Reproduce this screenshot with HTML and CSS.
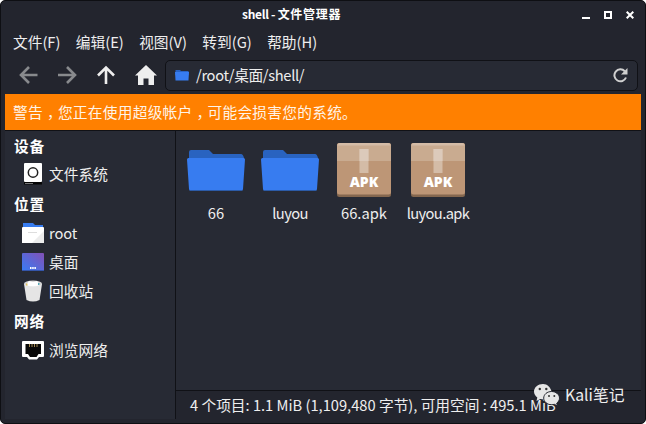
FILE: index.html
```html
<!DOCTYPE html>
<html lang="zh-CN">
<head>
<meta charset="utf-8">
<title>shell - 文件管理器</title>
<link rel="stylesheet" href="styles.css">
</head>
<body>
<div class="window">
  <header class="titlebar">
    <h1 class="title">shell - <span class="title-cjk">文件管理器</span></h1>
    <div class="controls">
      <svg width="8" height="8" viewBox="0 0 8 8"><path d="M0 6h8v2H0z" fill="#fff"/></svg>
      <svg width="8" height="8" viewBox="0 0 8 8"><path d="M1 1h6v6H1z" fill="none" stroke="#fff" stroke-width="2"/></svg>
      <svg width="8" height="8" viewBox="0 0 8 8"><path d="M.7.7l6.600 6.600M7.300.7L.7 7.300" stroke="#fff" stroke-width="2"/></svg>
    </div>
  </header>
  <nav class="menubar">
    <span>文件(F)</span><span>编辑(E)</span><span>视图(V)</span><span>转到(G)</span><span>帮助(H)</span>
  </nav>
  <div class="toolbar">
    <svg class="tool" width="20" height="20" viewBox="0 0 20 20"><path d="M18.500 10H2.500M10 2l-8 8 8 8" fill="none" stroke="#888a8d" stroke-width="2.600"/></svg>
    <svg class="tool" width="20" height="20" viewBox="0 0 20 20"><path d="M1 10h16M10 2l8 8-8 8" fill="none" stroke="#888a8d" stroke-width="2.600"/></svg>
    <svg class="tool up" width="20" height="20" viewBox="0 0 20 20"><path d="M10 19V3M2 10.500l8-8 8 8" fill="none" stroke="#eee" stroke-width="2.600"/></svg>
    <svg class="tool home" width="22" height="20" viewBox="0 0 22 20"><path d="M11 0L0 10.500h3V20h5.500v-6.500h5V20H19v-9.500h3z" fill="#eee"/></svg>
    <div class="location">
      <svg width="14" height="11" viewBox="0 0 14 11"><path d="M.5 0H5l1 1h7.500v4H.5z" fill="#2963c4"/><path d="M0 2h14l-.5 8.500H.5z" fill="#377cf0"/></svg>
      <span class="path">/root/桌面/shell/</span>
      <svg width="15" height="15" viewBox="0 0 15 15"><path d="M11.800 3.200A6 6 0 1 0 13 9.500" fill="none" stroke="#d0d0d0" stroke-width="2"/><path d="M14.500 0v6.500H8z" fill="#d0d0d0"/></svg>
    </div>
  </div>
  <div class="warning">警告<span class="comma">，</span>您正在使用超级帐户<span class="comma">，</span>可能会损害您的系统。</div>
  <div class="body">
    <aside class="sidebar">
      <h2>设备</h2>
      <div class="place">
        <svg width="22" height="22" viewBox="0 0 22 22"><path d="M2 18h18v3.500H2z" fill="#050505"/><rect x="2" y="0" width="18" height="19" rx="1" fill="#fff"/><circle cx="11" cy="9.500" r="4.700" fill="none" stroke="#222" stroke-width="1.500"/><path d="M3 20h8v1H3z" fill="#777"/></svg>
        <span>文件系统</span>
      </div>
      <h2>位置</h2>
      <div class="place">
        <svg width="22" height="22" viewBox="0 0 22 22"><path d="M1 2h10l2 2h8v4H1z" fill="#377cf0"/><path d="M0 7q0-1 1-1h20q1 0 1 1v15H0z" fill="#fff"/><path d="M22 10v12H10z" fill="#ececec"/><path d="M6 11.500h9" stroke="#ddd"/></svg>
        <span class="latin">root</span>
      </div>
      <div class="place">
        <svg width="22" height="22" viewBox="0 0 22 22"><defs><linearGradient id="desk" x1="0" y1="1" x2="1" y2="0"><stop stop-color="#377cf5"/><stop offset="1" stop-color="#8350b5"/></linearGradient></defs><rect y="2" width="22" height="18" rx="1" fill="url(#desk)"/><path d="M0 19h22v1H0z" fill="#3455aa"/><path d="M8 16h1.500v2H8zM10.200 16h1.500v2h-1.500zM12.400 16h1.500v2h-1.500z" fill="#fff"/></svg>
        <span>桌面</span>
      </div>
      <div class="place">
        <svg width="22" height="22" viewBox="0 0 22 22"><path d="M2 4l2.500 16q6.500 3 13 0L20 4z" fill="#e5e5e5"/><ellipse cx="11" cy="3.500" rx="9" ry="3" fill="#d5d5d5"/><path d="M4 5l3-4 4 1 4-1 3 4q-7 3-14 0" fill="#fff"/><path d="M4 3.500h1.500v2H4z" fill="#e5c45b"/><path d="M16 3h1.500v2H16z" fill="#56a8b5"/></svg>
        <span>回收站</span>
      </div>
      <h2>网络</h2>
      <div class="place network">
        <svg width="22" height="22" viewBox="0 0 22 22"><path d="M1 2h20q1 0 1 1v14q0 1-1 1h-4l-2 2.500H7L5 18H1q-1 0-1-1V3q0-1 1-1z" fill="#fff"/><path d="M3.500 5h15.500v10h-2.500l-2 3H8l-2-3H3.500z" fill="#080808"/><path d="M7.500 5v3M10 5v3M12.500 5v3M15 5v3" stroke="#a48b55"/></svg>
        <span>浏览网络</span>
      </div>
    </aside>
    <main class="main">
      <div class="files">
        <figure class="file">
          <svg width="58" height="56" viewBox="0 0 58 56"><use href="#folder"/>
            <defs><g id="folder"><path d="M2 9q0-2 2-2h18l4 4h28q2 0 3 4v6H2z" fill="#2963c0"/><path d="M1.500 15h55q1.500 0 1.500 1.500L56 46q0 2-2 2H4q-2 0-2-2L0 16.500Q0 15 1.500 15z" fill="#377cf0"/><path d="M3 47.500h52" stroke="#2c5ba7"/></g></defs>
          </svg>
          <figcaption>66</figcaption>
        </figure>
        <figure class="file">
          <svg width="58" height="56" viewBox="0 0 58 56"><use href="#folder"/></svg>
          <figcaption class="tight">luyou</figcaption>
        </figure>
        <figure class="file">
          <svg width="58" height="56" viewBox="0 0 58 56">
            <defs><g id="package"><rect x="2" y="0" width="54" height="54" rx="2.500" fill="#84674f"/><rect x="2" y="0" width="54" height="51.500" rx="2.500" fill="#bd9676"/><path d="M2 18V2.500Q2 0 4.500 0h49Q56 0 56 2.500V18z" fill="#c9ab90"/><path d="M2.500 2.500Q3 0 5 0h48q2 0 2.500 2.500z" fill="#d4bca7"/><path d="M24.500 6h9v24h-9z" fill="#d4bca7"/><path d="M24.500 6h9v12h-9z" fill="#dccabb"/></g></defs>
            <use href="#package"/><text class="badge" x="29" y="43.500" text-anchor="middle">APK</text>
          </svg>
          <figcaption>66.apk</figcaption>
        </figure>
        <figure class="file">
          <svg width="58" height="56" viewBox="0 0 58 56"><use href="#package"/><text class="badge" x="29" y="43.500" text-anchor="middle">APK</text></svg>
          <figcaption class="tight">luyou.apk</figcaption>
        </figure>
      </div>
      <footer class="status">4 个项目: 1.1 MiB (1,109,480 字节), 可用空间 : 495.1 MiB</footer>
    </main>
  </div>
  <div class="watermark">
    <svg width="26" height="23" viewBox="0 0 26 23"><path d="M9 0C4 0 0 3.400 0 7.600c0 2.400 1.300 4.500 3.300 5.900L2.500 17l3.800-2q4 1 7-.2C21 14 18 0 9 0z" fill="#e6e6e6"/><path d="M17.500 7.500c-4.400 0-7.800 3-7.800 6.600s3.500 6.600 7.800 6.600q1.500 0 2.800-.4l3.200 1.700-.8-2.800c1.600-1.200 2.800-3 2.800-5.100 0-3.600-3.600-6.600-8-6.600z" fill="#e6e6e6" stroke="#23252e" stroke-width="1"/><g fill="#333"><circle cx="5.800" cy="5" r="1.200"/><circle cx="12.300" cy="5" r="1.200"/><circle cx="15" cy="12" r="1"/><circle cx="20.300" cy="12" r="1"/></g></svg>
    <span class="watermark-name">Kali笔记</span>
  </div>
</div>
</body>
</html>
```
FILE: styles.css
```css
* { box-sizing: border-box; }
body {
  margin: 0;
  background: #fff;
  color: #eee;
  font: 14.7px/20px "Noto Sans CJK SC", sans-serif;
}
svg { display: block; flex: none; }
h1, h2, figure { margin: 0; }
.window {
  position: relative;
  width: 646px;
  height: 424px;
  padding: 0 4px 4px;
  border: 1px solid #0e0f13;
  border-radius: 5px;
  background: #23252e;
  display: flex;
  flex-direction: column;
  white-space: nowrap;
}
.titlebar {
  height: 27px;
  display: flex;
  align-items: center;
  justify-content: space-between;
  padding: 0 7px 0 237px;
}
.title {
  padding-bottom: 2px;
  color: #fff;
  font-size: 12px;
  font-weight: 700;
  line-height: 20px;
  letter-spacing: -.3px;
}
.title-cjk { letter-spacing: .7px; }
.controls {
  display: flex;
  gap: 14px;
}
.menubar {
  height: 28px;
  display: flex;
  align-items: center;
  gap: 15.4px;
  padding: 0 8px;
}
.toolbar {
  height: 38px;
  display: flex;
  align-items: center;
  padding: 0 3px 0 14px;
}
.tool { margin-right: 18px; }
.up { margin: 0 18px 0 1px; }
.home { margin: 0 8px 0 1px; }
.location {
  flex: 1;
  height: 31px;
  display: flex;
  align-items: center;
  padding: 0 9px;
  border: 1px solid #101116;
  border-radius: 5px;
  background: #272a34;
}
.path {
  flex: 1;
  padding-left: 7px;
  letter-spacing: -.35px;
}
.warning {
  height: 36px;
  padding: 8px 8px 0;
  background: #ff8000;
  color: #fff4e8;
  letter-spacing: .27px;
}
.comma {
  margin-left: 4px;
  letter-spacing: -3.73px;
}
.body {
  flex: 1;
  min-height: 0;
  display: flex;
  border-top: 1px solid #101116;
  background: #272a34;
}
.sidebar {
  width: 171px;
  border-right: 1px solid #101116;
}
.sidebar h2 {
  height: 29.15px;
  padding: 5px 9px 0;
  color: #fff;
  font-size: 14.7px;
  font-weight: 700;
  letter-spacing: .7px;
}
.place {
  height: 29.15px;
  display: flex;
  align-items: center;
  gap: 5px;
  padding: 0 0 1px 17px;
  letter-spacing: .1px;
}
.network { padding-bottom: 0; }
.latin {
  padding-top: 2px;
  letter-spacing: -.1px;
}
.main {
  flex: 1;
  display: flex;
  flex-direction: column;
}
.files {
  flex: 1;
  display: flex;
  padding: 12px 3px;
}
.file {
  width: 74px;
  display: flex;
  flex-direction: column;
  align-items: center;
  gap: 4px;
}
.tight { letter-spacing: -.6px; }
.badge {
  fill: #fff;
  font: 800 14px "Open Sans", sans-serif;
}
.status {
  height: 29px;
  padding: 4px 14px;
  border-top: 1px solid #101116;
  background: #23252e;
}
.watermark {
  position: absolute;
  left: 533px;
  top: 383px;
  display: flex;
  gap: 5px;
  font-size: 15.8px;
  line-height: 20px;
}
.watermark-name { padding-top: 1px; }
```
